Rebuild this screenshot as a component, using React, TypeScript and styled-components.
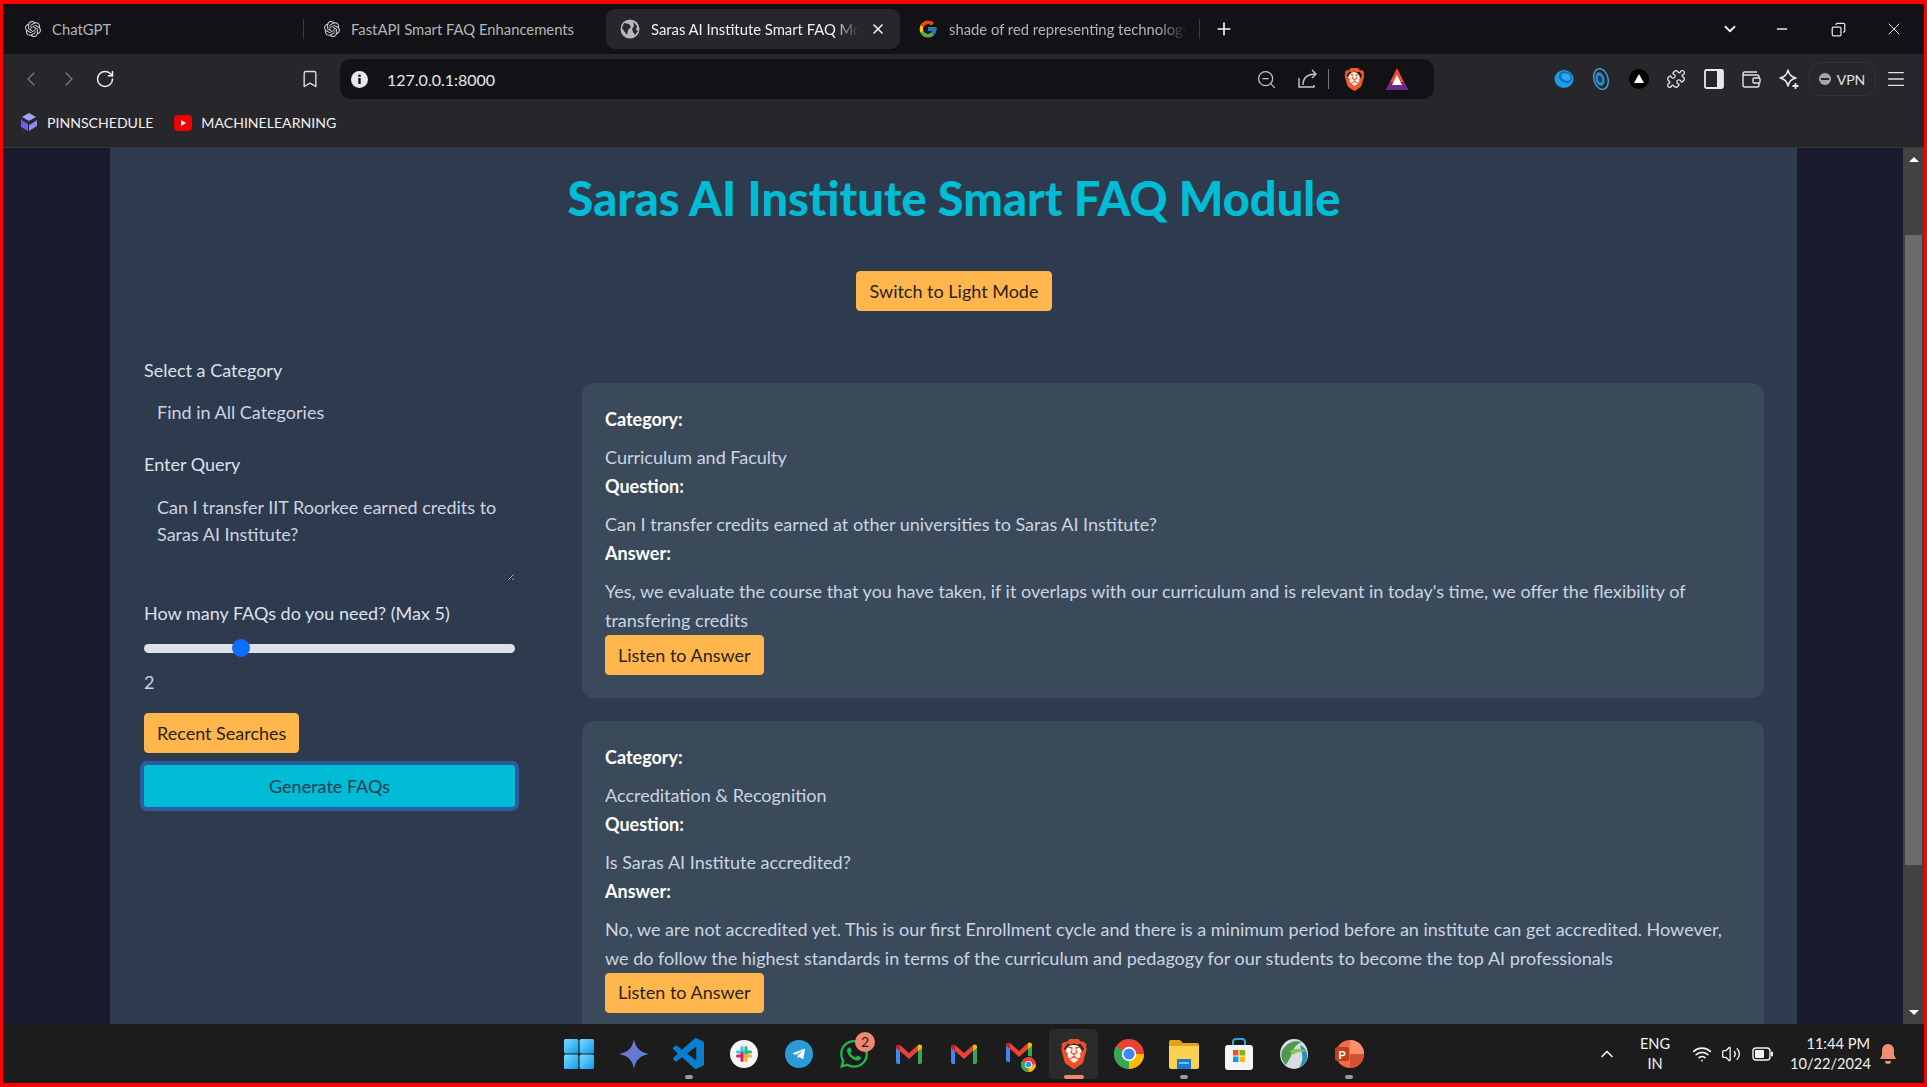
import React from 'react';
import styled, { createGlobalStyle } from 'styled-components';
import {
	Bookmark,
	ChevronDown,
	ChevronLeft,
	ChevronRight,
	ChevronUp,
	Copy,
	Menu,
	Minus,
	Plus,
	Puzzle,
	RotateCw,
	Volume2,
	Wifi,
	X,
	ZoomOut,
} from 'lucide-react';
import { SiBrave, SiOpenai } from 'react-icons/si';
import { FaTelegramPlane, FaWhatsapp } from 'react-icons/fa';
import { FcGoogle } from 'react-icons/fc';

const UI_FONT = `Lato, "Open Sans", "Liberation Sans", sans-serif`;

const GlobalStyle = createGlobalStyle`
	html, body {
		margin: 0;
		padding: 0;
		overflow: hidden;
		background: #1a1a2e;
	}
	* {
		box-sizing: border-box;
	}
`;

const faqs = [
	{
		category: 'Curriculum and Faculty',
		question: 'Can I transfer credits earned at other universities to Saras AI Institute?',
		answer:
			"Yes, we evaluate the course that you have taken, if it overlaps with our curriculum and is relevant in today's time, we offer the flexibility of transfering credits",
	},
	{
		category: 'Accreditation & Recognition',
		question: 'Is Saras AI Institute accredited?',
		answer:
			'No, we are not accredited yet. This is our first Enrollment cycle and there is a minimum period before an institute can get accredited. However, we do follow the highest standards in terms of the curriculum and pedagogy for our students to become the top AI professionals',
	},
];

/* browser chrome */

const Frame = styled.div`
	width: 1927px;
	height: 1087px;
	border-style: solid;
	border-color: #ff0000;
	border-width: 4px 3px;
	display: flex;
	flex-direction: column;
	overflow: hidden;
	font-family: ${UI_FONT};
`;

const TabStrip = styled.div`
	height: 50px;
	flex: none;
	background: #121216;
	display: flex;
	align-items: center;
	color: #e6e6e8;
`;

const Tab = styled.div<{ $width: number; $pad: number; $active?: boolean }>`
	width: ${(p) => p.$width}px;
	height: 40px;
	flex: none;
	display: flex;
	align-items: center;
	gap: 11px;
	padding-left: ${(p) => p.$pad}px;
	border-radius: 9px;
	background: ${(p) => (p.$active ? '#27272b' : 'transparent')};
	color: ${(p) => (p.$active ? '#f1f1f3' : '#b4b4b8')};
	font-size: 14.8px;
`;

const TabTitle = styled.span<{ $width?: number; $fade?: boolean }>`
	display: block;
	white-space: nowrap;
	overflow: hidden;
	width: ${(p) => (p.$width ? `${p.$width}px` : 'auto')};
	${(p) =>
		p.$fade &&
		`-webkit-mask-image: linear-gradient(to right, #000 88%, transparent);
		mask-image: linear-gradient(to right, #000 88%, transparent);`}
`;

const TabDivider = styled.div`
	width: 1px;
	height: 20px;
	flex: none;
	background: #3a3a3f;
`;

const WindowControls = styled.div`
	margin-left: auto;
	display: flex;
	align-items: center;
	padding-right: 4px;
`;

const Toolbar = styled.div`
	height: 50px;
	flex: none;
	background: #27272b;
	display: flex;
	align-items: center;
	padding-left: 9px;
`;

const Slot = styled.div<{ $w: number; $after?: number; $before?: number }>`
	width: ${(p) => p.$w}px;
	flex: none;
	display: flex;
	align-items: center;
	justify-content: center;
	margin-right: ${(p) => p.$after ?? 0}px;
	margin-left: ${(p) => p.$before ?? 0}px;
	color: #e2e2e4;
`;

const UrlBar = styled.div`
	width: 1094px;
	height: 40px;
	margin-left: 13px;
	flex: none;
	border-radius: 11px;
	background: #121216;
	display: flex;
	align-items: center;
	padding: 0 20px 0 9px;
`;

const UrlText = styled.span`
	margin-left: 18px;
	font-size: 16px;
	color: #e8e8ea;
`;

const UrlActions = styled.div`
	margin-left: auto;
	display: flex;
	align-items: center;
`;

const UrlDivider = styled.div`
	width: 1px;
	height: 20px;
	margin: 0 8px 0 3px;
	background: #77777b;
`;

const ExtensionIcons = styled.div`
	margin-left: 111px;
	display: flex;
	align-items: center;
`;

const VpnPill = styled.div`
	width: 67px;
	height: 34px;
	margin-left: 1px;
	flex: none;
	border: 1px solid #34343a;
	border-radius: 12px;
	display: flex;
	align-items: center;
	justify-content: center;
	gap: 6px;
	color: #e2e2e4;
	font-size: 14px;
`;

const VpnDot = styled.span`
	width: 12px;
	height: 12px;
	border-radius: 50%;
	background: #a4a4ac;
	position: relative;
	&::after {
		content: '';
		position: absolute;
		left: 2px;
		right: 2px;
		top: 5px;
		height: 2px;
		background: #27272b;
	}
`;

const BookmarkBar = styled.div`
	height: 44px;
	flex: none;
	background: #27272b;
	border-bottom: 1px solid #38383c;
	display: flex;
	align-items: center;
	padding: 0 0 6px 17px;
	color: #f0f0f2;
	font-size: 14.1px;
`;

const BookmarkItem = styled.div<{ $after?: number }>`
	display: flex;
	align-items: center;
	gap: 9px;
	margin-right: ${(p) => p.$after ?? 0}px;
`;

const BraveMark = styled.span<{ $size: number }>`
	width: ${(p) => p.$size}px;
	height: ${(p) => p.$size}px;
	display: flex;
	position: relative;
	isolation: isolate;
	&::before {
		content: '';
		position: absolute;
		z-index: -1;
		left: 22%;
		right: 22%;
		top: 20%;
		bottom: 18%;
		border-radius: 45%;
		background: #fff3ea;
	}
`;

/* page */

const Viewport = styled.div`
	flex: 1;
	min-height: 0;
	display: flex;
`;

const Scroller = styled.div`
	flex: 1;
	min-width: 0;
	overflow: hidden;
	background: #1a1a2e;
`;

const Container = styled.main`
	width: 1687px;
	margin-left: 107px;
	padding: 23px 33px 40px 34px;
	background: #2e3a4e;
	color: #cbd5e0;
	font-size: 18px;
	line-height: 27px;
`;

const Title = styled.h1`
	margin: 0 0 46px;
	font-size: 47px;
	line-height: 54px;
	font-weight: 900;
	text-align: center;
	color: #00bcd4;
`;

const ThemeRow = styled.div`
	display: flex;
	justify-content: center;
`;

const OrangeButton = styled.button<{ $pad?: number }>`
	height: 40px;
	padding: 0 ${(p) => p.$pad ?? 13}px;
	border: 1px solid #ffb74d;
	border-radius: 4px;
	background: #ffb74d;
	color: #2b2118;
	font: inherit;
	display: block;
`;

const Columns = styled.div`
	display: grid;
	grid-template-columns: 371px 1182px;
	column-gap: 67px;
`;

const Sidebar = styled.aside`
	padding-top: 46px;
	display: flex;
	flex-direction: column;
	align-items: flex-start;
`;

const FieldLabel = styled.label<{ $mt?: number }>`
	display: block;
	margin-top: ${(p) => p.$mt ?? 0}px;
	color: #dbe2ea;
`;

const CategorySelect = styled.select`
	width: 100%;
	height: 53px;
	margin-top: 2px;
	padding: 0 13px;
	border: none;
	background: transparent;
	appearance: none;
	color: #cbd5e0;
	font: inherit;
`;

const QueryBox = styled.textarea`
	width: 100%;
	height: 101px;
	margin-top: 2px;
	padding: 14px 13px;
	border: none;
	background: transparent;
	color: #cbd5e0;
	font: inherit;
	outline: none;
	display: block;
`;

const CountSlider = styled.input`
	width: 100%;
	height: 18px;
	margin: 12px 0 0;
	appearance: none;
	background: transparent;
	display: block;
	&::-webkit-slider-runnable-track {
		height: 9px;
		border-radius: 5px;
		background: #dee2e6;
	}
	&::-webkit-slider-thumb {
		appearance: none;
		width: 18px;
		height: 18px;
		margin-top: -4.5px;
		border-radius: 50%;
		background: #0d6efd;
	}
`;

const CountValue = styled.div`
	margin-top: 12px;
	color: #cbd5e0;
`;

const RecentButton = styled(OrangeButton)`
	margin-top: 17px;
`;

const GenerateButton = styled.button`
	width: 100%;
	height: 42px;
	margin-top: 12px;
	border: none;
	border-radius: 3px;
	background: #00bcd4;
	box-shadow: 0 0 0 4px #2d5ba3;
	color: #1f3a52;
	font: inherit;
`;

const Results = styled.section`
	padding-top: 72px;
	display: flex;
	flex-direction: column;
	gap: 23px;
`;

const FaqCard = styled.article`
	padding: 21.6px 23px;
	border-radius: 12px;
	background: #3a4a5b;
	line-height: 28.8px;
`;

const FieldName = styled.strong`
	display: block;
	margin-bottom: 9.6px;
	color: #ffffff;
	font-weight: 700;
`;

const FieldText = styled.p`
	margin: 0;
	color: #cbd5e0;
`;

const ListenButton = styled(OrangeButton)`
	margin-bottom: 1.4px;
`;

const Scrollbar = styled.div`
	width: 21px;
	flex: none;
	background: #424242;
	display: flex;
	flex-direction: column;
	align-items: center;
`;

const ScrollArrow = styled.div<{ $down?: boolean }>`
	width: 0;
	height: 0;
	margin-top: ${(p) => (p.$down ? 'auto' : '9px')};
	margin-bottom: ${(p) => (p.$down ? '9px' : '0')};
	border-left: 5px solid transparent;
	border-right: 5px solid transparent;
	${(p) => (p.$down ? 'border-top: 5px solid #fff;' : 'border-bottom: 5px solid #fff;')}
`;

const ScrollThumb = styled.div`
	width: 17px;
	height: 630px;
	margin-top: 73px;
	background: #6b6b6b;
`;

/* taskbar */

const Taskbar = styled.footer`
	height: 59px;
	flex: none;
	background: #1c1c1c;
	display: grid;
	grid-template-columns: 1fr auto 1fr;
	align-items: center;
	color: #f2f2f2;
`;

const AppIcons = styled.div`
	grid-column: 2;
	display: flex;
	align-items: center;
	height: 100%;
`;

const AppIcon = styled.div<{ $active?: boolean; $mark?: 'dot' | 'bar' }>`
	width: 55px;
	height: 100%;
	flex: none;
	display: flex;
	align-items: center;
	justify-content: center;
	position: relative;
	&::before {
		content: '';
		display: ${(p) => (p.$active ? 'block' : 'none')};
		position: absolute;
		inset: 5px 3px 4px;
		border-radius: 5px;
		background: #2b2b2b;
	}
	&::after {
		content: '';
		display: ${(p) => (p.$mark ? 'block' : 'none')};
		position: absolute;
		bottom: 4px;
		left: 50%;
		width: ${(p) => (p.$mark === 'bar' ? '20px' : '8px')};
		height: 4px;
		transform: translateX(-50%);
		border-radius: 2px;
		background: ${(p) => (p.$mark === 'bar' ? '#ef8770' : '#9a9a9a')};
	}
	& > * {
		position: relative;
	}
`;

const Badge = styled.span`
	position: absolute !important;
	top: 8px;
	left: 29px;
	width: 20px;
	height: 20px;
	border-radius: 50%;
	background: #ef8770;
	color: #1c1c1c;
	font-size: 14px;
	line-height: 20px;
	text-align: center;
`;

const Tray = styled.div`
	grid-column: 3;
	display: flex;
	align-items: center;
	justify-content: flex-end;
	padding-right: 26px;
`;

const TrayText = styled.div<{ $align: string; $w: number; $after: number }>`
	width: ${(p) => p.$w}px;
	margin-right: ${(p) => p.$after}px;
	font-size: 14.6px;
	line-height: 20px;
	text-align: ${(p) => p.$align};
	white-space: nowrap;
`;

const TraySlot = styled.div<{ $w: number; $after?: number }>`
	width: ${(p) => p.$w}px;
	margin-right: ${(p) => p.$after ?? 0}px;
	display: flex;
	justify-content: center;
`;

/* drawn icons */

const GlobeIcon = () => (
	<svg width='20' height='20' viewBox='0 0 20 20'>
		<circle cx='10' cy='10' r='9.5' fill='#b8b8bc' />
		<path d='M4 4l5 1 2 3-3 3-1 5-3-4-2-3zM13 3l4 4-1 4 2 1-3 4-2-3-1-3 2-3z' fill='#2a2a2e' />
	</svg>
);

const PinnLogo = () => (
	<svg width='18' height='20' viewBox='0 0 18 20'>
		<path d='M9 0l7 4-7 4-7-4z' fill='#a7a2f5' />
		<path d='M1 6l7 4v8l-7-4z' fill='#6a63ea' />
		<path d='M17 7v6l-8 5v-6z' fill='#8f89f2' />
		<path d='M2 5l7 4 7-4v3l-7 4-7-4z' fill='#27272b' opacity='0.55' />
	</svg>
);

const YoutubeIcon = () => (
	<svg width='18' height='18' viewBox='0 0 18 18'>
		<rect x='0' y='1' width='18' height='16' rx='4' fill='#f00000' />
		<path d='M7 6l5 3-5 3z' fill='#fff' />
	</svg>
);

const InfoDot = () => (
	<svg width='17' height='17' viewBox='0 0 17 17'>
		<circle cx='8.5' cy='8.5' r='8.5' fill='#e8e8ea' />
		<rect x='7.3' y='7' width='2.4' height='6' fill='#121216' />
		<rect x='7.3' y='3.6' width='2.4' height='2.2' fill='#121216' />
	</svg>
);

const ShareIcon = () => (
	<svg width='22' height='22' viewBox='0 0 22 22' fill='none' stroke='#c8c8cc' strokeWidth='1.4'>
		<path d='M2 10v9h15v-2' />
		<path d='M6 17c0-7 4-11 13-11' />
		<path d='M15 2l4 4-4 4' />
	</svg>
);

const BatTriangle = () => (
	<svg width='24' height='24' viewBox='0 0 24 24'>
		<path d='M12 1L1 23h22z' fill='#f04a3a' />
		<path d='M1 23l4-8h14l4 8z' fill='#6a2a8f' />
		<path d='M12 8l-4 8h8z' fill='#fff' />
		<path d='M8 16h8l1 2H7z' fill='#fff' />
	</svg>
);

const SphereIcon = () => (
	<svg width='20' height='20' viewBox='0 0 20 20'>
		<ellipse cx='10' cy='10' rx='9.5' ry='9' fill='#1e9be8' />
		<ellipse cx='11.5' cy='8' rx='7' ry='5.5' fill='#0f6fb5' transform='rotate(25 11.5 8)' />
		<ellipse cx='12' cy='8' rx='5' ry='3.5' fill='#2ca8f0' transform='rotate(25 12 8)' />
	</svg>
);

const SpeakerBlue = () => (
	<svg width='18' height='22' viewBox='0 0 18 22'>
		<ellipse cx='9' cy='11' rx='7' ry='10.5' fill='none' stroke='#3f9ad8' strokeWidth='1.5' transform='rotate(-15 9 11)' />
		<ellipse cx='8' cy='11' rx='4.5' ry='7' fill='#2f87c8' transform='rotate(-15 8 11)' />
		<ellipse cx='8' cy='11' rx='2' ry='3.5' fill='#123f64' transform='rotate(-15 8 11)' />
	</svg>
);

const BlackTriangleBadge = () => (
	<svg width='20' height='20' viewBox='0 0 20 20'>
		<circle cx='10' cy='10' r='10' fill='#000' />
		<path d='M10 5l5 9H5z' fill='#fff' />
	</svg>
);

const SidePanelIcon = () => (
	<svg width='20' height='20' viewBox='0 0 20 20'>
		<rect x='1' y='1' width='18' height='18' rx='1.5' fill='none' stroke='#e8e8ea' strokeWidth='1.8' />
		<rect x='13' y='1' width='6' height='18' fill='#e8e8ea' />
	</svg>
);

const WalletIcon = () => (
	<svg width='20' height='20' viewBox='0 0 20 20' fill='none' stroke='#e2e2e4' strokeWidth='1.4'>
		<path d='M16 3H4a2 2 0 0 0-2 2v11a2 2 0 0 0 2 2h12a2 2 0 0 0 2-2v-2' />
		<path d='M2 6h14a2 2 0 0 1 2 2v1' />
		<rect x='12' y='9' width='7' height='5' rx='1' />
	</svg>
);

const SparkleIcon = () => (
	<svg width='22' height='22' viewBox='0 0 22 22' fill='none' stroke='#e8e8ea' strokeWidth='1.5'>
		<path d='M10 2c1 5 3 7 8 8-5 1-7 3-8 8-1-5-3-7-8-8 5-1 7-3 8-8z' strokeLinejoin='round' />
		<path d='M17.500 15v6M14.500 18h6' strokeWidth='1.8' />
	</svg>
);

const WindowsIcon = () => (
	<svg width='30' height='30' viewBox='0 0 30 30'>
		<defs>
			<linearGradient id='winFill' x1='0' y1='0' x2='1' y2='1'>
				<stop offset='0' stopColor='#7fdcfb' />
				<stop offset='1' stopColor='#0c9bef' />
			</linearGradient>
		</defs>
		<rect x='0' y='0' width='14.4' height='14.4' rx='1.5' fill='url(#winFill)' />
		<rect x='15.6' y='0' width='14.4' height='14.4' rx='1.5' fill='url(#winFill)' />
		<rect x='0' y='15.6' width='14.4' height='14.4' rx='1.5' fill='url(#winFill)' />
		<rect x='15.6' y='15.6' width='14.4' height='14.4' rx='1.5' fill='url(#winFill)' />
	</svg>
);

const GeminiIcon = () => (
	<svg width='30' height='30' viewBox='0 0 30 30'>
		<defs>
			<linearGradient id='gemFill' x1='0' y1='0' x2='1' y2='1'>
				<stop offset='0' stopColor='#8b6fc9' />
				<stop offset='1' stopColor='#3f87e0' />
			</linearGradient>
		</defs>
		<path d='M15 0c1.2 8.5 6.5 13.8 15 15-8.5 1.2-13.8 6.5-15 15-1.2-8.500-6.500-13.800-15-15 8.500-1.200 13.800-6.500 15-15z' fill='url(#gemFill)' />
	</svg>
);

const VsCodeIcon = () => (
	<svg width='31' height='31' viewBox='0 0 24 24'>
		<path
			d='M23.15 2.587L18.21.21a1.494 1.494 0 0 0-1.705.29l-9.46 8.63-4.12-3.128a.999.999 0 0 0-1.276.057L.327 7.261A1 1 0 0 0 .326 8.74L3.899 12 .326 15.26a1 1 0 0 0 .001 1.479L1.65 17.94a.999.999 0 0 0 1.276.057l4.12-3.128 9.46 8.63a1.492 1.492 0 0 0 1.704.29l4.942-2.377A1.5 1.5 0 0 0 24 20.06V3.939a1.5 1.5 0 0 0-.85-1.352zm-5.146 14.861L10.826 12l7.178-5.448v10.896z'
			fill='#0a7fd0'
		/>
	</svg>
);

const SlackIcon = () => (
	<svg width='28' height='28' viewBox='0 0 28 28'>
		<circle cx='14' cy='14' r='14' fill='#f6f6f6' />
		<rect x='6' y='10.5' width='10' height='3' rx='1.5' fill='#36c5f0' />
		<rect x='10.500' y='6' width='3' height='6' rx='1.5' fill='#36c5f0' />
		<rect x='14.500' y='6' width='3' height='10' rx='1.5' fill='#2eb67d' />
		<rect x='16' y='10.500' width='6' height='3' rx='1.5' fill='#2eb67d' />
		<rect x='12' y='14.500' width='10' height='3' rx='1.5' fill='#ecb22e' />
		<rect x='14.500' y='16' width='3' height='6' rx='1.5' fill='#ecb22e' />
		<rect x='10.500' y='12' width='3' height='10' rx='1.5' fill='#e01e5a' />
		<rect x='6' y='14.500' width='6' height='3' rx='1.5' fill='#e01e5a' />
	</svg>
);

const TelegramIcon = () => (
	<svg width='28' height='28' viewBox='0 0 28 28'>
		<circle cx='14' cy='14' r='14' fill='#2a9bd8' />
		<FaTelegramPlane x='7' y='7' size={14} color='#fff' />
	</svg>
);

const GmailIcon = ({ size = 28 }: { size?: number }) => (
	<svg width={size} height={size} viewBox='0 0 28 28'>
		<path d='M1 6l4-1v19H3a2 2 0 0 1-2-2z' fill='#4285f4' />
		<path d='M23 5l4 1v16a2 2 0 0 1-2 2h-2z' fill='#34a853' />
		<path d='M5 5l9 8 9-8v6l-9 8-9-8z' fill='#ea4335' />
		<path d='M1 6a3 3 0 0 1 4-1v6L1 8z' fill='#c5221f' />
		<path d='M23 5a3 3 0 0 1 4 1v2l-4 3z' fill='#fbbc04' />
	</svg>
);

const ChromeIcon = ({ size = 30 }: { size?: number }) => (
	<svg width={size} height={size} viewBox='0 0 30 30'>
		<circle cx='15' cy='15' r='15' fill='#ea4335' />
		<path d='M15 15L2 7.500A15 15 0 0 0 15 30z' fill='#34a853' />
		<path d='M15 15h15A15 15 0 0 1 15 30z' fill='#fbbc04' />
		<circle cx='15' cy='15' r='7.200' fill='#fff' />
		<circle cx='15' cy='15' r='5.600' fill='#4285f4' />
	</svg>
);

const BadgeChrome = styled.span`
	position: absolute;
	right: -3px;
	bottom: -3px;
	display: flex;
	border-radius: 50%;
	box-shadow: 0 0 0 1px #1c1c1c;
`;

const GmailChromeIcon = () => (
	<div>
		<GmailIcon />
		<BadgeChrome>
			<ChromeIcon size={15} />
		</BadgeChrome>
	</div>
);

const FolderIcon = () => (
	<svg width='30' height='30' viewBox='0 0 30 30'>
		<path d='M0 3a2 2 0 0 1 2-2h9l3 3h14a2 2 0 0 1 2 2v3H0z' fill='#e3a21a' />
		<path d='M0 7h30v21a2 2 0 0 1-2 2H2a2 2 0 0 1-2-2z' fill='#fbd24f' />
		<path d='M8 20h14v10H8z' fill='#1a7ad0' />
		<rect x='10' y='23' width='10' height='2' fill='#6cc0f5' />
	</svg>
);

const StoreIcon = () => (
	<svg width='30' height='32' viewBox='0 0 30 32'>
		<path d='M9 8V4a3 3 0 0 1 3-3h6a3 3 0 0 1 3 3v4' fill='none' stroke='#29a6e0' strokeWidth='2' />
		<rect x='1' y='7' width='28' height='25' rx='3' fill='#f5f5f5' />
		<rect x='9' y='12' width='5.500' height='5.500' fill='#f25022' />
		<rect x='15.500' y='12' width='5.500' height='5.500' fill='#7fba00' />
		<rect x='9' y='18.500' width='5.500' height='5.500' fill='#00a4ef' />
		<rect x='15.500' y='18.500' width='5.500' height='5.500' fill='#ffb900' />
	</svg>
);

const EarthIcon = () => (
	<svg width='28' height='30' viewBox='0 0 28 30'>
		<ellipse cx='14' cy='15' rx='14' ry='15' fill='#d8dee0' />
		<path d='M2 12C7 2 16 1 22 3c-5 2-9 6-10 11-2 6-5 10-6 12C2 22 0 17 2 12z' fill='#4c9a52' />
		<path d='M20 6c5 2 8 7 7 13-1 5-4 8-8 10 3-5 4-10 3-14z' fill='#2a8fb8' />
		<path d='M10 12c5-3 12-3 17 1-5-1-11 0-15 3z' fill='#8cc152' />
	</svg>
);

const PowerPointIcon = () => (
	<svg width='30' height='30' viewBox='0 0 30 30'>
		<circle cx='16' cy='15' r='14' fill='#ed6c47' />
		<path d='M16 1a14 14 0 0 1 14 14H16z' fill='#ff8f6b' />
		<path d='M16 15h14a14 14 0 0 1-14 14z' fill='#d35230' />
		<rect x='1' y='8' width='14' height='14' rx='2' fill='#c43e1c' />
		<text x='8' y='19.500' textAnchor='middle' fontSize='12' fontWeight='700' fill='#fff' fontFamily='Lato, sans-serif'>
			P
		</text>
	</svg>
);

const BatteryIcon = () => (
	<svg width='21' height='14' viewBox='0 0 21 14'>
		<rect x='1' y='1' width='17' height='12' rx='3' fill='none' stroke='#f2f2f2' strokeWidth='1.400' />
		<rect x='3' y='3' width='9' height='8' rx='1' fill='#f2f2f2' />
		<rect x='19' y='4.500' width='2' height='5' rx='1' fill='#f2f2f2' />
	</svg>
);

const BellIcon = () => (
	<svg width='18' height='22' viewBox='0 0 18 22'>
		<path d='M9 1a6 6 0 0 0-6 6v5l-2 4h16l-2-4V7a6 6 0 0 0-6-6z' fill='#ef8f72' />
		<path d='M6 18a3 3 0 0 0 6 0z' fill='#ef8f72' />
	</svg>
);

const FaqItem = ({ faq }: { faq: (typeof faqs)[number] }) => (
	<FaqCard>
		<FieldName>Category:</FieldName>
		<FieldText>{faq.category}</FieldText>
		<FieldName>Question:</FieldName>
		<FieldText>{faq.question}</FieldText>
		<FieldName>Answer:</FieldName>
		<FieldText>{faq.answer}</FieldText>
		<ListenButton type='button' $pad={12}>
			Listen to Answer
		</ListenButton>
	</FaqCard>
);

export default function App() {
	return (
		<>
			<GlobalStyle />
			<Frame>
				<TabStrip>
					<Tab $width={300} $pad={22}>
						<SiOpenai size={16} color='#d0d0d4' />
						<TabTitle>ChatGPT</TabTitle>
					</Tab>
					<TabDivider />
					<Tab $width={302} $pad={20}>
						<SiOpenai size={16} color='#d0d0d4' />
						<TabTitle>FastAPI Smart FAQ Enhancements</TabTitle>
					</Tab>
					<Tab $width={294} $pad={14} $active>
						<GlobeIcon />
						<TabTitle $width={208} $fade>
							Saras AI Institute Smart FAQ Module
						</TabTitle>
						<X size={16} color='#f1f1f3' strokeWidth={2.4} />
					</Tab>
					<Tab $width={299} $pad={18}>
						<FcGoogle size={20} />
						<TabTitle $width={238} $fade>
							shade of red representing technology
						</TabTitle>
					</Tab>
					<TabDivider />
					<Slot $w={48}>
						<Plus size={20} color='#f0f0f2' />
					</Slot>
					<WindowControls>
						<Slot $w={52}>
							<ChevronDown size={18} strokeWidth={2.4} color='#f0f0f2' />
						</Slot>
						<Slot $w={52}>
							<Minus size={16} color='#e6e6e8' />
						</Slot>
						<Slot $w={60}>
							<Copy size={15} color='#e6e6e8' style={{ transform: 'scaleX(-1)' }} />
						</Slot>
						<Slot $w={52}>
							<X size={20} strokeWidth={1.2} color='#e6e6e8' />
						</Slot>
					</WindowControls>
				</TabStrip>

				<Toolbar>
					<Slot $w={38}>
						<ChevronLeft size={24} strokeWidth={1.2} color='#7b7b80' />
					</Slot>
					<Slot $w={38}>
						<ChevronRight size={24} strokeWidth={1.2} color='#7b7b80' />
					</Slot>
					<Slot $w={34}>
						<RotateCw size={20} strokeWidth={1.8} color='#f0f0f2' />
					</Slot>
					<Slot $w={34} $before={171}>
						<Bookmark size={20} strokeWidth={1.6} />
					</Slot>
					<UrlBar>
						<Slot $w={20}>
							<InfoDot />
						</Slot>
						<UrlText>127.0.0.1:8000</UrlText>
						<UrlActions>
							<Slot $w={34} $after={8}>
								<ZoomOut size={21} strokeWidth={1.4} color='#c8c8cc' />
							</Slot>
							<Slot $w={34}>
								<ShareIcon />
							</Slot>
							<UrlDivider />
							<Slot $w={34} $after={9}>
								<BraveMark $size={23}>
									<SiBrave size={23} color='#f0592a' />
								</BraveMark>
							</Slot>
							<Slot $w={34}>
								<BatTriangle />
							</Slot>
						</UrlActions>
					</UrlBar>
					<ExtensionIcons>
						<Slot $w={37.5}>
							<SphereIcon />
						</Slot>
						<Slot $w={37.5}>
							<SpeakerBlue />
						</Slot>
						<Slot $w={37.5}>
							<BlackTriangleBadge />
						</Slot>
						<Slot $w={37.5}>
							<Puzzle size={20} strokeWidth={1.6} />
						</Slot>
						<Slot $w={37.5}>
							<SidePanelIcon />
						</Slot>
						<Slot $w={37.5}>
							<WalletIcon />
						</Slot>
						<Slot $w={37.5}>
							<SparkleIcon />
						</Slot>
					</ExtensionIcons>
					<VpnPill>
						<VpnDot />
						VPN
					</VpnPill>
					<Slot $w={40}>
						<Menu size={22} strokeWidth={1.4} />
					</Slot>
				</Toolbar>

				<BookmarkBar>
					<BookmarkItem $after={21}>
						<PinnLogo />
						<span>PINNSCHEDULE</span>
					</BookmarkItem>
					<BookmarkItem>
						<YoutubeIcon />
						<span>MACHINELEARNING</span>
					</BookmarkItem>
				</BookmarkBar>

				<Viewport>
					<Scroller>
						<Container>
							<Title>Saras AI Institute Smart FAQ Module</Title>
							<ThemeRow>
								<OrangeButton type='button'>Switch to Light Mode</OrangeButton>
							</ThemeRow>
							<Columns>
								<Sidebar>
									<FieldLabel>Select a Category</FieldLabel>
									<CategorySelect defaultValue='all'>
										<option value='all'>Find in All Categories</option>
									</CategorySelect>
									<FieldLabel $mt={12}>Enter Query</FieldLabel>
									<QueryBox
										readOnly
										value='Can I transfer IIT Roorkee earned credits to Saras AI Institute?'
									/>
									<FieldLabel $mt={19}>How many FAQs do you need? (Max 5)</FieldLabel>
									<CountSlider type='range' min={1} max={5} defaultValue={2} />
									<CountValue>2</CountValue>
									<RecentButton type='button' $pad={12}>
										Recent Searches
									</RecentButton>
									<GenerateButton type='button'>Generate FAQs</GenerateButton>
								</Sidebar>
								<Results>
									{faqs.map((faq) => (
										<FaqItem key={faq.category} faq={faq} />
									))}
								</Results>
							</Columns>
						</Container>
					</Scroller>
					<Scrollbar>
						<ScrollArrow />
						<ScrollThumb />
						<ScrollArrow $down />
					</Scrollbar>
				</Viewport>

				<Taskbar>
					<AppIcons>
						<AppIcon><WindowsIcon /></AppIcon>
						<AppIcon><GeminiIcon /></AppIcon>
						<AppIcon $mark='dot'><VsCodeIcon /></AppIcon>
						<AppIcon><SlackIcon /></AppIcon>
						<AppIcon><TelegramIcon /></AppIcon>
						<AppIcon>
							<FaWhatsapp size={32} color='#25b34b' />
							<Badge>2</Badge>
						</AppIcon>
						<AppIcon><GmailIcon /></AppIcon>
						<AppIcon><GmailIcon /></AppIcon>
						<AppIcon><GmailChromeIcon /></AppIcon>
						<AppIcon $active $mark='bar'>
							<BraveMark $size={30}>
								<SiBrave size={30} color='#f0512a' />
							</BraveMark>
						</AppIcon>
						<AppIcon><ChromeIcon /></AppIcon>
						<AppIcon $mark='dot'><FolderIcon /></AppIcon>
						<AppIcon><StoreIcon /></AppIcon>
						<AppIcon><EarthIcon /></AppIcon>
						<AppIcon $mark='dot'><PowerPointIcon /></AppIcon>
					</AppIcons>
					<Tray>
						<TraySlot $w={20} $after={18}>
							<ChevronUp size={20} strokeWidth={2} />
						</TraySlot>
						<TrayText $align='center' $w={40} $after={16}>
							ENG
							<br />
							IN
						</TrayText>
						<TraySlot $w={22} $after={7}>
							<Wifi size={20} strokeWidth={2} />
						</TraySlot>
						<TraySlot $w={22} $after={9}>
							<Volume2 size={20} strokeWidth={1.6} />
						</TraySlot>
						<TraySlot $w={22} $after={17}>
							<BatteryIcon />
						</TraySlot>
						<TrayText $align='right' $w={80} $after={8}>
							11:44 PM
							<br />
							10/22/2024
						</TrayText>
						<TraySlot $w={20}>
							<BellIcon />
						</TraySlot>
					</Tray>
				</Taskbar>
			</Frame>
		</>
	);
}
